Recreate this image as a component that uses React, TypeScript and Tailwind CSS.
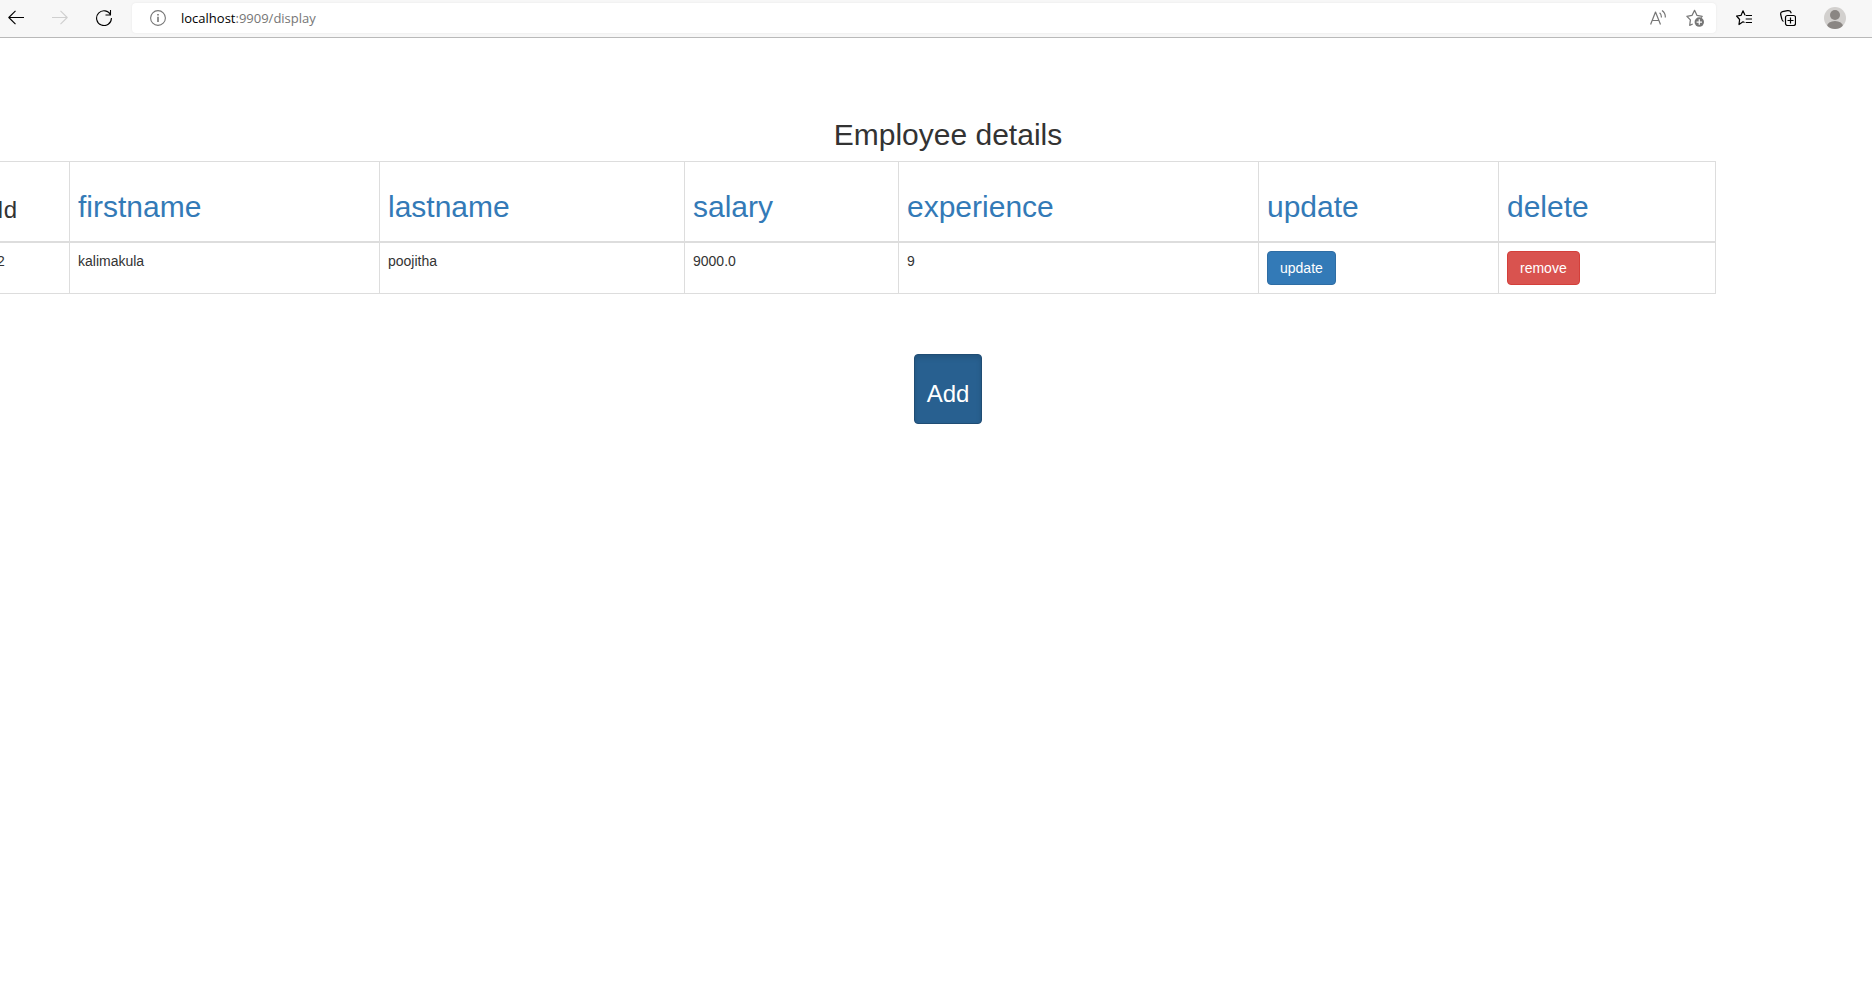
import type { ReactNode } from 'react';

const employees = [
  { id: 2, firstname: 'kalimakula', lastname: 'poojitha', salary: '9000.0', experience: 9 },
];

const sortable = ['firstname', 'lastname', 'salary', 'experience', 'update', 'delete'];

const cell = 'border border-[#ddd] p-2 text-left align-top';
const button =
  'rounded border px-3 py-1.5 text-sm leading-5 text-white';

function Icon({ children, className = 'size-4' }: { children: ReactNode; className?: string }) {
  return (
    <svg viewBox="0 0 16 16" fill="none" stroke="currentColor" strokeWidth="1.1" strokeLinejoin="round" className={className} aria-hidden="true">
      {children}
    </svg>
  );
}

function BrowserBar() {
  return (
    <header className="flex h-[38px] items-center border-b border-[#b9b9b9] bg-[#f7f7f7] pb-px pl-2 text-black">
      <nav className="flex gap-7">
        <button aria-label="Back">
          <Icon><path d="M16 7.5H.8M7.5.8.8 7.5l6.7 6.7" /></Icon>
        </button>
        <button aria-label="Forward" className="text-[#cfcfcf]">
          <Icon><path d="M0 7.5h15.2M8.5.8l6.7 6.700-6.700 6.700" /></Icon>
        </button>
        <button aria-label="Reload">
          <Icon><path d="M14.700 5A7.400 7.400 0 1 0 15.400 8M14.500 0v5h-5" /></Icon>
        </button>
      </nav>
      <div className="ml-5 flex h-[30px] flex-1 items-center rounded bg-white pl-[18px] pr-3 text-[#767676] shadow-[0_0_2px_#e4e4e4]">
        <Icon>
          <circle cx="8" cy="8" r="7.400" />
          <path d="M8 6.800v5.200M8 4v1.400" strokeWidth="1.600" />
        </Icon>
        <div className="ml-[15px] flex-1 font-['Open_Sans',sans-serif] text-[13px] leading-5">
          <span className="text-black">localhost</span>:9909/display
        </div>
        <div className="flex items-center gap-5">
          <button aria-label="Read aloud">
            <Icon>
              <path d="M.6 14.500 5.500 2l5 12.500M2.200 10.500h6.600M9.600 2.800q2 1.700 1.800 4.700M12 .5q3.600 2.500 3.300 7" strokeWidth="1.200" />
            </Icon>
          </button>
          <button aria-label="Add to favorites">
            <Icon className="size-[18px]">
              <path d="M6 13.300 3.300 14.500l.6-4.800L.8 6.500l4.500-.8L7.600 1.200l2.200 4.500 4.600.8-1 1.200" />
              <circle cx="11.800" cy="11.600" r="4.200" fill="currentColor" stroke="none" />
              <path d="M11.800 9.200v4.800M9.400 11.600h4.800" stroke="white" />
            </Icon>
          </button>
        </div>
      </div>
      <div className="flex items-center gap-7 pl-5 pr-[26px]">
        <button aria-label="Favorites">
          <Icon>
            <path d="M8.500 12.500 7 11.800l-4 2.700.6-5L.6 6l4.400-.6L7 .8l2 4.500M9.700 5.500H16M9.700 9H16M9.700 12.500H16" strokeWidth="1.200" />
          </Icon>
        </button>
        <button aria-label="Collections">
          <Icon>
            <rect x="5.500" y="5.500" width="10" height="10" rx="2" strokeWidth="1.200" />
            <path d="M10.500 7.500v6M7.500 10.500h6M3.500 11.500C2.500 11 2 10 1.800 9L.7 4.500C.4 3 1 2 2.500 1.600L7.500.7C9 .5 10.500 1 11 2.500l.3.8" strokeWidth="1.200" />
          </Icon>
        </button>
        <button aria-label="Profile">
          <svg viewBox="0 0 22 22" className="size-[22px]" aria-hidden="true">
            <clipPath id="avatar"><circle cx="11" cy="11" r="11" /></clipPath>
            <g clipPath="url(#avatar)">
              <rect width="22" height="22" fill="#d2d0ce" />
              <circle cx="11" cy="8" r="5" fill="#8a8683" />
              <ellipse cx="11" cy="19.500" rx="8" ry="5.500" fill="#8a8683" />
            </g>
          </svg>
        </button>
      </div>
    </header>
  );
}

export default function App() {
  return (
    <div className="min-h-screen overflow-hidden bg-white font-['Liberation_Sans',Arial,sans-serif] text-sm leading-5 text-[#333]">
      <BrowserBar />
      <main className="pt-20">
        <h2 className="mb-2.5 pl-6 text-center text-[30px] leading-[33px]">Employee details</h2>
        <div className="-ml-3 mr-[156px]">
          <table className="w-full table-fixed border-collapse border border-[#ddd]">
            <colgroup>
              <col className="w-[81px]" />
              <col className="w-[310px]" />
              <col className="w-[305px]" />
              <col className="w-[214px]" />
              <col className="w-[360px]" />
              <col className="w-[240px]" />
              <col className="w-[217px]" />
            </colgroup>
            <thead>
              <tr>
                <th className="border border-b-2 border-[#ddd] p-2 text-left align-bottom font-normal">
                  <h3 className="mb-2.5 mt-5 text-2xl leading-[26px]">Id</h3>
                </th>
                {sortable.map((name) => (
                  <th key={name} className="border border-b-2 border-[#ddd] p-2 text-left align-bottom font-normal">
                    <h2 className="mb-2.5 mt-5 text-[30px] leading-[33px]">
                      <a href={`#${name}`} className="text-[#337ab7]">{name}</a>
                    </h2>
                  </th>
                ))}
              </tr>
            </thead>
            <tbody>
              {employees.map((e) => (
                <tr key={e.id}>
                  <td className={cell}>{e.id}</td>
                  <td className={cell}>{e.firstname}</td>
                  <td className={cell}>{e.lastname}</td>
                  <td className={cell}>{e.salary}</td>
                  <td className={cell}>{e.experience}</td>
                  <td className={cell}>
                    <button className={`${button} block border-[#2e6da4] bg-[#337ab7]`}>update</button>
                  </td>
                  <td className={cell}>
                    <button className={`${button} block border-[#d43f3a] bg-[#d9534f]`}>remove</button>
                  </td>
                </tr>
              ))}
            </tbody>
          </table>
        </div>
        <div className="mt-[60px] flex justify-center pl-6">
          <button className={`${button} border-[#204d74] bg-[#286090] shadow-[inset_0_3px_5px_rgba(0,0,0,0.125)]`}>
            <span className="mb-2.5 mt-5 block text-2xl leading-[26px]">Add</span>
          </button>
        </div>
      </main>
    </div>
  );
}
